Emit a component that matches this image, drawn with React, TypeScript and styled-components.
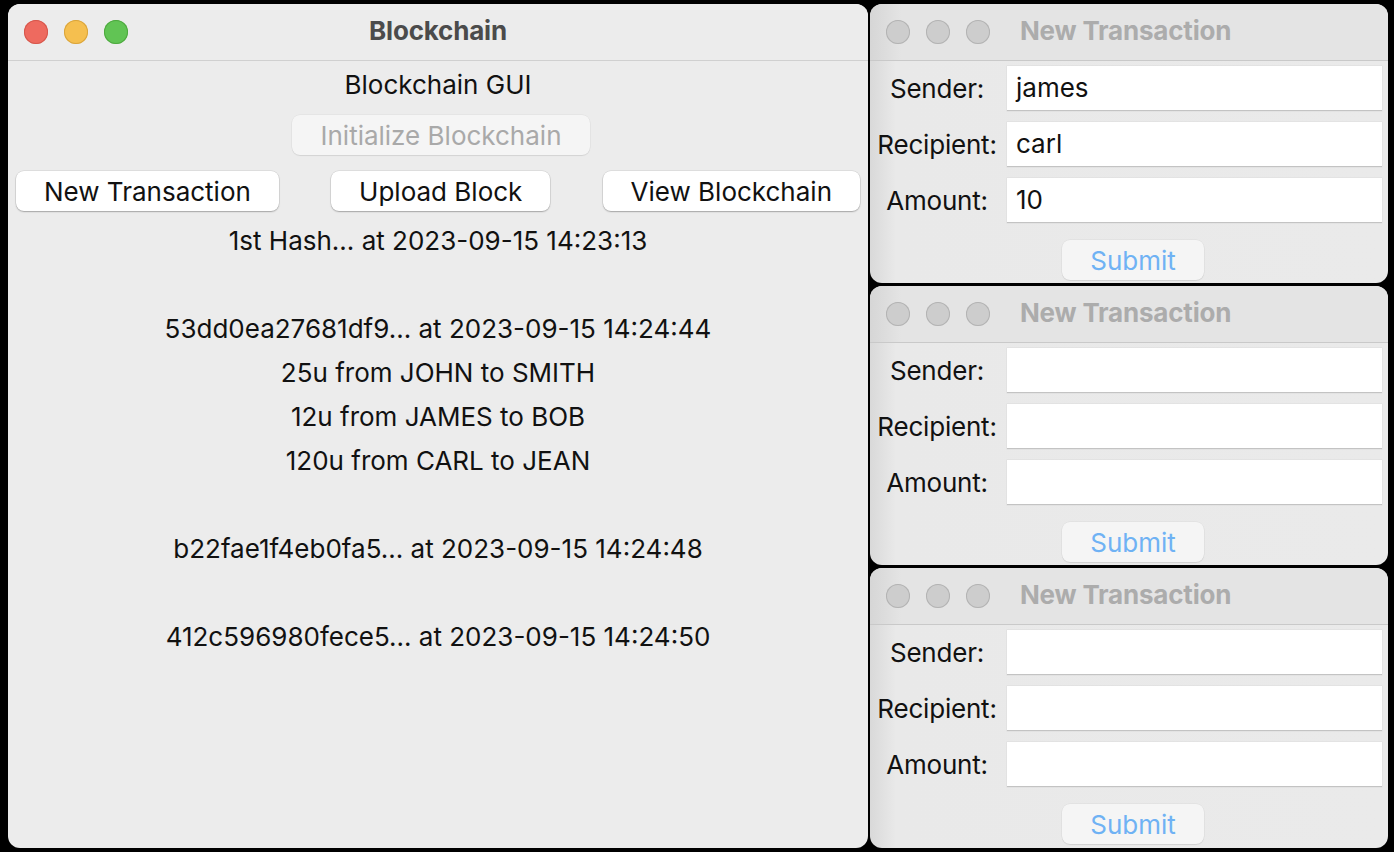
import React from 'react';
import styled, { createGlobalStyle } from 'styled-components';

const Global = createGlobalStyle`
  html, body {
    margin: 0;
    padding: 0;
    background: #000;
    font-family: Inter, "Liberation Sans", sans-serif;
  }
`;

const Desktop = styled.div`
  width: 1394px;
  height: 852px;
  box-sizing: border-box;
  padding: 4px 6px 4px 8px;
  display: grid;
  grid-template-columns: 860px 518px;
  column-gap: 2px;
  background: #000;
`;

const MainWindow = styled.div`
  background: #ececec;
  border-radius: 12px;
  display: flex;
  flex-direction: column;
  overflow: hidden;
`;

const TitleBar = styled.div<{ $inactive?: boolean }>`
  height: 56px;
  flex: none;
  display: flex;
  align-items: center;
  position: relative;
  padding-left: 16px;
  border-bottom: 1px solid ${p => (p.$inactive ? '#c9c9c9' : '#d0d0d0')};
  background: ${p => (p.$inactive ? 'linear-gradient(90deg, #d6d6d6 0%, #e4e4e4 6%, #e4e4e4 100%)' : '#ececec')};
`;

const Lights = styled.div`
  display: flex;
  gap: 16px;
`;

const Light = styled.span<{ $color: string; $ring: string }>`
  width: 24px;
  height: 24px;
  border-radius: 50%;
  background: ${p => p.$color};
  box-shadow: inset 0 0 0 1px ${p => p.$ring};
`;

const WindowTitle = styled.div<{ $inactive?: boolean }>`
  font-size: 26px;
  font-weight: 700;
  color: ${p => (p.$inactive ? '#acacac' : '#4b4b4b')};
  letter-spacing: -0.2px;
  margin-top: -3px;
`;

const CenteredTitle = styled(WindowTitle)`
  position: absolute;
  left: 0;
  right: 0;
  text-align: center;
  pointer-events: none;
`;

const MainBody = styled.div`
  display: flex;
  flex-direction: column;
  align-items: center;
  padding-top: 6px;
  font-size: 26px;
  color: #111;
`;

const Heading = styled.div`
  height: 36px;
  line-height: 36px;
`;

const MacButton = styled.button<{ $disabled?: boolean; $blue?: boolean }>`
  font-family: inherit;
  font-size: 26px;
  height: 40px;
  padding: 0 28px;
  border-radius: 8px;
  border: none;
  background: ${p => (p.$disabled || p.$blue ? '#f5f5f5' : '#ffffff')};
  color: ${p => (p.$blue ? '#6fb2f4' : p.$disabled ? '#a9a9a9' : '#111')};
  box-shadow: ${p =>
    p.$disabled || p.$blue
      ? '0 0 0 0.5px rgba(0,0,0,0.06), 0 1px 1px rgba(0,0,0,0.08)'
      : '0 0 0 0.5px rgba(0,0,0,0.12), 0 1px 1.5px rgba(0,0,0,0.25)'};
  cursor: default;
`;

const InitRow = styled.div`
  margin-top: 12px;
  padding-left: 6px;
  display: flex;
  justify-content: center;
`;

const ButtonRow = styled.div`
  align-self: stretch;
  margin-top: 16px;
  padding: 0 8px;
  display: flex;
  justify-content: space-between;
`;

const ChainList = styled.div`
  margin-top: 8px;
  display: flex;
  flex-direction: column;
  align-items: center;
`;

const ChainLine = styled.div`
  height: 44px;
  line-height: 44px;
  white-space: pre;
`;

const SideColumn = styled.div`
  display: grid;
  grid-template-rows: 279px 279px 280px;
  row-gap: 3px;
`;

const TxWindow = styled.div`
  background: linear-gradient(90deg, #d9d9d9 0%, #e9e9e9 5%, #eaeaea 100%);
  border-radius: 12px;
  display: flex;
  flex-direction: column;
  overflow: hidden;
`;

const TxTitle = styled.div`
  display: flex;
  align-items: center;
  gap: 30px;
`;

const Form = styled.div`
  padding: 5px 6px 0 0;
  display: grid;
  grid-template-columns: 134px 1fr;
  column-gap: 3px;
  row-gap: 11px;
  align-items: center;
`;

const Label = styled.div`
  font-size: 26px;
  color: #111;
  text-align: center;
  letter-spacing: -0.2px;
`;

const Field = styled.div`
  height: 45px;
  background: #fff;
  border-bottom: 1.5px solid #c3c3c3;
  box-shadow: 0 0 0 0.5px rgba(0,0,0,0.06);
  font-size: 26px;
  line-height: 44px;
  padding-left: 9px;
  color: #111;
  box-sizing: border-box;
`;

const SubmitRow = styled.div`
  display: flex;
  justify-content: center;
  margin-top: 17px;
  padding-left: 8px;
`;

const chain = [
  '1st Hash... at 2023-09-15 14:23:13',
  ' ',
  '53dd0ea27681df9... at 2023-09-15 14:24:44',
  '25u from JOHN to SMITH',
  '12u from JAMES to BOB',
  '120u from CARL to JEAN',
  ' ',
  'b22fae1f4eb0fa5... at 2023-09-15 14:24:48',
  ' ',
  '412c596980fece5... at 2023-09-15 14:24:50',
];

const forms = [
  { sender: 'james', recipient: 'carl', amount: '10' },
  { sender: '', recipient: '', amount: '' },
  { sender: '', recipient: '', amount: '' },
];

const TxForm = ({ sender, recipient, amount }: { sender: string; recipient: string; amount: string }) => (
  <TxWindow>
    <TitleBar $inactive>
      <TxTitle>
        <Lights>
          <Light $color="#cdcdcd" $ring="#b3b3b3" />
          <Light $color="#cdcdcd" $ring="#b3b3b3" />
          <Light $color="#cdcdcd" $ring="#b3b3b3" />
        </Lights>
        <WindowTitle $inactive>New Transaction</WindowTitle>
      </TxTitle>
    </TitleBar>
    <Form>
      <Label>Sender:</Label>
      <Field>{sender}</Field>
      <Label>Recipient:</Label>
      <Field>{recipient}</Field>
      <Label>Amount:</Label>
      <Field>{amount}</Field>
    </Form>
    <SubmitRow>
      <MacButton $blue>Submit</MacButton>
    </SubmitRow>
  </TxWindow>
);

const App = () => (
  <>
    <Global />
    <Desktop>
      <MainWindow>
        <TitleBar>
          <Lights>
            <Light $color="#ee6a5f" $ring="#d5574c" />
            <Light $color="#f5bf4f" $ring="#d9a43c" />
            <Light $color="#61c454" $ring="#4ea83f" />
          </Lights>
          <CenteredTitle>Blockchain</CenteredTitle>
        </TitleBar>
        <MainBody>
          <Heading>Blockchain GUI</Heading>
          <InitRow>
            <MacButton $disabled>Initialize Blockchain</MacButton>
          </InitRow>
          <ButtonRow>
            <MacButton>New Transaction</MacButton>
            <MacButton>Upload Block</MacButton>
            <MacButton>View Blockchain</MacButton>
          </ButtonRow>
          <ChainList>
            {chain.map((line, i) => (
              <ChainLine key={i}>{line}</ChainLine>
            ))}
          </ChainList>
        </MainBody>
      </MainWindow>
      <SideColumn>
        {forms.map((f, i) => (
          <TxForm key={i} {...f} />
        ))}
      </SideColumn>
    </Desktop>
  </>
);

export default App;
